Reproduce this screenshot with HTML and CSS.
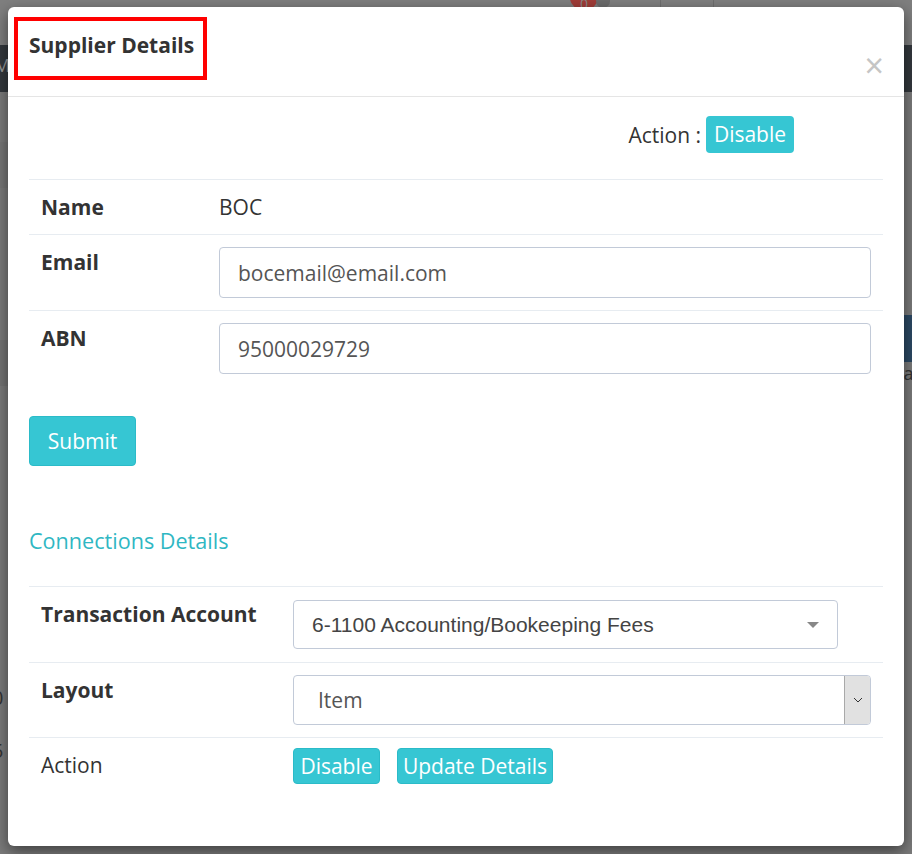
FILE: index.html
```html
<!DOCTYPE html>
<html lang="en">

<head>
  <meta charset="UTF-8" />
  <meta name="viewport" content="width=device-width, initial-scale=1.0" />
  <title>Supplier Details</title>
  <link rel="stylesheet" href="styles.css">
</head>

<body>
  <!-- page behind the modal (dimmed) -->
  <div class="page">
    <div class="topbar">
      <span class="top-badge">0</span>
      <span class="top-avatar"></span>
      <span class="top-sep sep-1"></span>
      <span class="top-sep sep-2"></span>
    </div>
    <div class="navbar"><span class="nav-text">M</span></div>
    <div class="content">
      <div class="content-left">
        <div class="stripe stripe-a"></div>
        <div class="stripe stripe-b"></div>
        <div class="row-text row-0">0</div>
        <div class="row-text row-5">5</div>
      </div>
      <div class="content-right">
        <div class="blue-head"></div>
        <div class="right-text">La</div>
      </div>
    </div>
  </div>

  <div class="modal">
    <div class="modal-header">
      <h4 class="modal-title">Supplier Details</h4>
      <span class="close">&times;</span>
    </div>

    <div class="modal-body">
      <div class="action-line">
        <span>Action :</span>
        <span class="badge">Disable</span>
      </div>

      <table class="details-table">
        <colgroup>
          <col class="col-label">
          <col>
        </colgroup>
        <tr>
          <th>Name</th>
          <td>BOC</td>
        </tr>
        <tr>
          <th>Email</th>
          <td><input type="text" class="form-control" value="bocemail@email.com"></td>
        </tr>
        <tr class="no-line">
          <th>ABN</th>
          <td><input type="text" class="form-control" value="95000029729"></td>
        </tr>
      </table>

      <button type="button" class="btn btn-submit">Submit</button>

      <h3 class="section-title">Connections Details</h3>

      <table class="details-table conn-table">
        <colgroup>
          <col class="col-label-wide">
          <col>
        </colgroup>
        <tr>
          <th>Transaction Account</th>
          <td>
            <div class="select2">
              <span class="select2-text">6-1100 Accounting/Bookeeping Fees</span>
              <span class="select2-arrow"></span>
            </div>
          </td>
        </tr>
        <tr>
          <th>Layout</th>
          <td>
            <div class="native-select">
              <span class="native-text">Item</span>
              <span class="native-arrow">
                <svg width="10" height="6" viewBox="0 0 10 6">
                  <path d="M1 1 L5 5 L9 1" fill="none" stroke="#333" stroke-width="1" />
                </svg>
              </span>
            </div>
          </td>
        </tr>
        <tr>
          <td class="plain-label">Action</td>
          <td class="btn-cell">
            <button type="button" class="btn btn-small btn-disable">Disable</button>
            <button type="button" class="btn btn-small btn-update">Update Details</button>
          </td>
        </tr>
      </table>
    </div>
  </div>
</body>

</html>
```

FILE: styles.css
```css
body {
  font-family: "Open Sans", sans-serif;
  margin: 0;
  padding: 0;
  background-color: #7b7b7b;
  height: 854px;
  overflow: hidden;
  color: #333;
}

/* dimmed page behind */
.page {
  width: 912px;
}

.topbar {
  height: 45px;
  background-color: #7f7f7f;
  position: relative;
  overflow: hidden;
}

.top-badge {
  position: absolute;
  left: 570px;
  top: -14px;
  width: 28px;
  height: 24px;
  border-radius: 50%;
  background-color: #a13d38;
  color: #8a8a8a;
  font-size: 14px;
  text-align: center;
  line-height: 36px;
}

.top-avatar {
  position: absolute;
  left: 596px;
  top: -6px;
  width: 14px;
  height: 14px;
  border-radius: 50%;
  background-color: #6c6c6c;
}

.top-sep {
  position: absolute;
  top: 0;
  width: 1px;
  height: 45px;
  background-color: #6e6e6e;
}

.sep-1 {
  left: 660px;
}

.sep-2 {
  left: 713px;
}

.navbar {
  height: 47px;
  background-color: #33383d;
}

.nav-text {
  display: block;
  margin-left: -6px;
  padding-top: 8px;
  color: #9a9a9a;
  font-size: 18px;
}

.content {
  display: flex;
  justify-content: space-between;
}

.content-left {
  width: 20px;
}

.stripe {
  height: 46px;
  background-color: #777;
}

.stripe-a {
  margin-top: 50px;
}

.stripe-b {
  margin-top: 152px;
  background-color: #747474;
}

.row-text {
  color: #333;
  font-size: 20px;
  margin-left: -8px;
}

.row-0 {
  margin-top: 298px;
}

.row-5 {
  margin-top: 26px;
}

.content-right {
  width: 20px;
}

.blue-head {
  margin-top: 223px;
  height: 47px;
  background-color: #2c4964;
}

.right-text {
  color: #333;
  font-size: 18px;
  margin-left: 2px;
  line-height: 22px;
}

/* modal */
.modal {
  position: absolute;
  top: 7px;
  left: 8px;
  width: 896px;
  height: 839px;
  background-color: #fff;
  border-radius: 6px;
  box-shadow: 0 5px 15px rgba(0, 0, 0, 0.5);
}

.modal-header {
  display: flex;
  justify-content: space-between;
  padding: 10px 20px 16px 6px;
  border-bottom: 1px solid #e5e5e5;
}

.modal-title {
  margin: 0;
  border: 4px solid #ff0000;
  padding: 11px 9px 17px 11px;
  font-size: 21px;
  font-weight: bold;
  line-height: 27px;
  color: #333;
}

.close {
  align-self: flex-end;
  margin-bottom: 0;
  font-size: 34px;
  line-height: 30px;
  color: #c5c5c5;
}

.modal-body {
  padding: 19px 21px 0 21px;
}

.action-line {
  display: flex;
  justify-content: flex-end;
  align-items: center;
  gap: 5px;
  padding-right: 89px;
  margin-bottom: 26px;
  font-size: 21px;
}

.badge {
  width: 88px;
  text-align: center;
  background-color: #36c6d3;
  color: #fff;
  padding: 4px 0;
  border-radius: 4px;
  line-height: 29px;
}

.details-table {
  width: 100%;
  border-collapse: collapse;
  table-layout: fixed;
  font-size: 21px;
}

.col-label {
  width: 178px;
}

.col-label-wide {
  width: 252px;
}

.details-table th,
.details-table td {
  border-top: 1px solid #e7ecf1;
  padding: 12px;
  line-height: 30px;
  vertical-align: top;
  text-align: left;
}

.details-table th {
  font-weight: bold;
  color: #333;
}

.details-table tr.no-line + tr th,
.details-table tr.no-line + tr td {
  border-top: none;
}

input.form-control {
  box-sizing: border-box;
  width: 100%;
  height: 51px;
  padding: 0 18px;
  border: 1px solid #c2cad8;
  border-radius: 4px;
  font-family: "Open Sans", sans-serif;
  font-size: 21px;
  color: #555;
  display: block;
}

.btn {
  font-family: "Open Sans", sans-serif;
  background-color: #36c6d3;
  color: #fff;
  border: 1px solid #2bbbc8;
  border-radius: 4px;
  cursor: pointer;
  padding: 0;
  text-align: center;
}

.btn-submit {
  display: block;
  margin-top: 30px;
  width: 107px;
  height: 50px;
  font-size: 21px;
}

.section-title {
  margin: 61px 0 31px 0;
  font-size: 21.6px;
  font-weight: normal;
  line-height: 28px;
  color: #2fb7c3;
}

.select2 {
  box-sizing: border-box;
  width: 545px;
  height: 49px;
  margin: 1px 0;
  border: 1px solid #c2cad8;
  border-radius: 4px;
  display: flex;
  align-items: center;
  justify-content: space-between;
  padding: 0 18px 0 18px;
}

.select2-text {
  font-family: "Liberation Sans", Arial, sans-serif;
  font-size: 21px;
  color: #444;
}

.select2-arrow {
  width: 0;
  height: 0;
  border-left: 6px solid transparent;
  border-right: 6px solid transparent;
  border-top: 6px solid #888;
}

.native-select {
  box-sizing: border-box;
  width: 100%;
  height: 50px;
  border: 1px solid #c2cad8;
  border-radius: 4px;
  display: flex;
  align-items: center;
  justify-content: space-between;
  overflow: hidden;
}

.native-text {
  padding-left: 24px;
  font-size: 21px;
  color: #555;
}

.native-arrow {
  width: 25px;
  height: 100%;
  background-color: #e1e1e1;
  border-left: 1px solid #a9a9a9;
  display: flex;
  align-items: center;
  justify-content: center;
}

.plain-label {
  color: #333;
}

.btn-cell {
  display: flex;
  gap: 17px;
}

.btn-small {
  margin-top: -2px;
  height: 36px;
  font-size: 21px;
  line-height: 34px;
}

.btn-disable {
  width: 87px;
}

.btn-update {
  width: 156px;
}
```
